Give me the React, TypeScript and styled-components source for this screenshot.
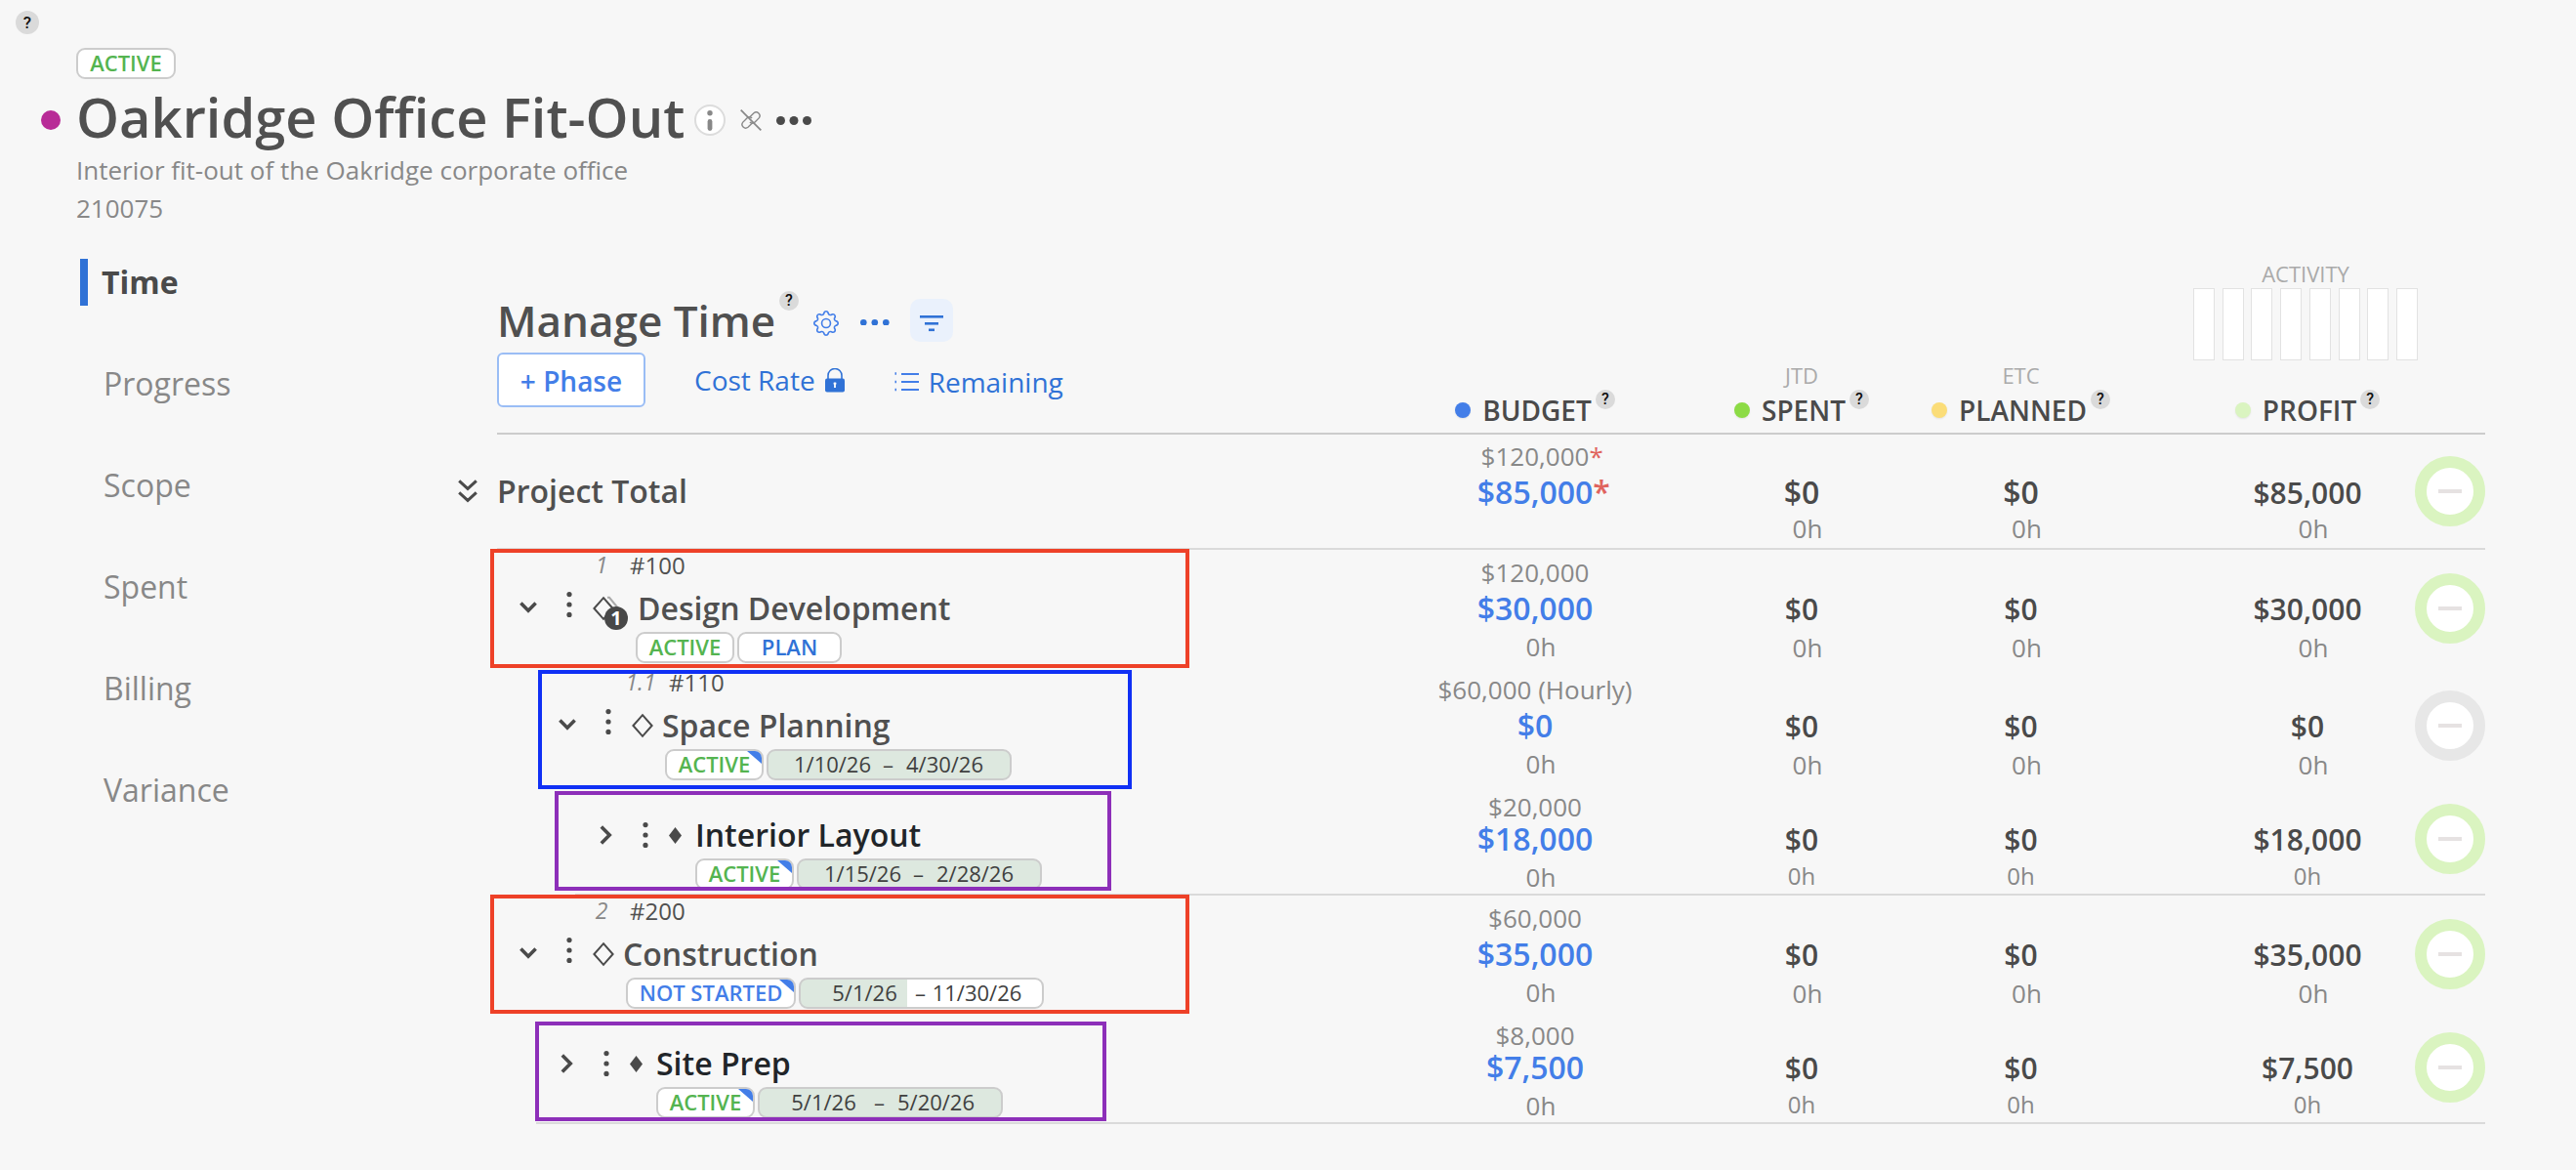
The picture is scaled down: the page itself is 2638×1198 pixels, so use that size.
import React from "react";
import styled, { createGlobalStyle } from "styled-components";
import { BsGear } from "react-icons/bs";

const GlobalStyle = createGlobalStyle`
  * { box-sizing: border-box; }
  body {
    margin: 0;
    background: #f7f7f7;
    color: #505050;
    font-family: "Open Sans", "Noto Sans", sans-serif;
  }
`;

const COLUMNS = "925px 274px 274px 175px 306px 82px";

/* ---------- shared pieces ---------- */

const Page = styled.div`
  width: 2638px;
  height: 1198px;
  overflow: hidden;
  background: #f7f7f7;
`;

const HelpBadge = styled.span<{ $size?: number }>`
  display: flex;
  flex: none;
  align-items: center;
  justify-content: center;
  width: ${(p) => p.$size ?? 20}px;
  height: ${(p) => p.$size ?? 20}px;
  border-radius: 50%;
  background: #dadada;
  color: #111;
  font: 500 ${(p) => ((p.$size ?? 20) > 20 ? 17 : 16)}px / 20px Roboto, sans-serif;
`;

const Tag = styled.span<{ $width: number; $color: string }>`
  position: relative;
  display: flex;
  flex: none;
  align-items: center;
  justify-content: center;
  width: ${(p) => p.$width}px;
  height: 32px;
  overflow: hidden;
  border: 2px solid #cccccc;
  border-radius: 9px;
  background: #fff;
  color: ${(p) => p.$color};
  font-size: 22px;
  font-weight: 600;
  line-height: 28px;
  padding-bottom: 2px;
  white-space: nowrap;
`;

const TagCorner = styled.i`
  position: absolute;
  top: 0;
  right: 0;
  width: 15px;
  height: 13px;
  background: #437ee8;
  clip-path: polygon(0 0, 100% 0, 100% 100%);
`;

/* ---------- project header ---------- */

const TopBar = styled.div`
  display: flex;
  height: 49px;
  padding: 11px 0 0 16px;
`;

const ProjectHeader = styled.header`
  height: 186px;
  padding-left: 78px;
`;

const TitleRow = styled.div`
  display: flex;
  align-items: center;
  height: 68px;
  margin: 8px 0 0 -36px;
`;

const ProjectDot = styled.i`
  width: 20px;
  height: 20px;
  margin-right: 16px;
  border-radius: 50%;
  background: #b82b97;
`;

const ProjectTitle = styled.h1`
  align-self: flex-start;
  width: 633px;
  margin: 0;
  font-size: 56px;
  font-weight: 600;
  line-height: 60px;
  white-space: nowrap;
`;

const InfoButton = styled.span`
  display: flex;
  align-items: center;
  justify-content: center;
  width: 32px;
  height: 32px;
  border: 2px solid #dcdcdc;
  border-radius: 50%;
  background: #fff;
`;

const HeaderIcon = styled.span<{ $left: number }>`
  display: flex;
  margin-left: ${(p) => p.$left}px;
`;

const Meta = styled.p<{ $line: number }>`
  margin: 0;
  color: #888888;
  font-size: 26px;
  line-height: ${(p) => p.$line}px;
`;

/* ---------- navigation ---------- */

const Body = styled.div`
  display: flex;
`;

const Nav = styled.nav`
  flex: none;
  display: flex;
  flex-direction: column;
  gap: 56px;
  width: 427px;
  margin-left: 82px;
  padding-top: 30px;
`;

const NavItem = styled.a<{ $active?: boolean }>`
  height: 48px;
  padding-left: ${(p) => (p.$active ? 14 : 16)}px;
  border-left: 8px solid ${(p) => (p.$active ? "#3072d6" : "transparent")};
  color: ${(p) => (p.$active ? "#4a4a4a" : "#888888")};
  font-size: 32px;
  font-weight: ${(p) => (p.$active ? 700 : 400)};
  line-height: 48px;
`;

/* ---------- table header ---------- */

const Main = styled.main`
  width: 2036px;
`;

const TableHead = styled.div`
  display: grid;
  grid-template-columns: ${COLUMNS};
  align-items: end;
  height: 210px;
  border-bottom: 2px solid #cccccc;
`;

const Tools = styled.div`
  height: 145px;
`;

const ToolRow = styled.div`
  display: flex;
  align-items: center;
  height: 60px;
`;

const SectionTitle = styled.h2`
  width: 289px;
  margin: 0;
  font-size: 44px;
  font-weight: 600;
  line-height: 60px;
  white-space: nowrap;
`;

const RaisedHelp = styled(HelpBadge)`
  align-self: flex-start;
`;

const ToolIcon = styled.span<{ $left: number; $drop?: number }>`
  display: flex;
  margin-left: ${(p) => p.$left}px;
  padding-top: ${(p) => p.$drop ?? 0}px;
  color: #437ee8;
`;

const FilterButton = styled.span`
  display: flex;
  align-items: center;
  justify-content: center;
  width: 44px;
  height: 44px;
  margin-left: 21px;
  padding-top: 7px;
  border-radius: 10px;
  background: #eaf1fc;
`;

const ActionRow = styled.div`
  display: flex;
  height: 56px;
  margin-top: 3px;
  color: #3072d6;
  font-size: 28px;
`;

const PhaseButton = styled.button`
  width: 152px;
  height: 56px;
  padding: 1px 0 0;
  border: 2px solid #9abdf5;
  border-radius: 6px;
  background: #fff;
  color: #437ee8;
  font: 600 28px / 52px "Open Sans", sans-serif;
`;

const Action = styled.span<{ $left: number; $line: number }>`
  display: flex;
  align-items: center;
  margin-left: ${(p) => p.$left}px;
  height: ${(p) => p.$line}px;
  line-height: ${(p) => p.$line}px;
  white-space: nowrap;

  svg { flex: none; }
`;

const HeadCell = styled.div<{ $inset?: number }>`
  display: flex;
  flex-direction: column;
  align-items: center;
  padding-left: ${(p) => p.$inset ?? 0}px;
  padding-bottom: 4px;
`;

const HeadNote = styled.span`
  color: #aaaaaa;
  font-size: 22px;
  line-height: 30px;
  margin-bottom: 2px;
`;

const HeadLabel = styled.div`
  display: flex;
  align-items: center;
  height: 38px;
  color: #4a4a4a;
  font-size: 28px;
  font-weight: 600;
  line-height: 38px;
`;

const LegendDot = styled.i<{ $color: string }>`
  width: 16px;
  height: 16px;
  margin-right: 12px;
  border-radius: 50%;
  background: ${(p) => p.$color};
  box-shadow: 0 1px 2px rgba(0, 0, 0, 0.08);
`;

const ColumnHelp = styled(HelpBadge)`
  align-self: flex-start;
  margin: -2px 0 0 4px;
`;

const ActivityBars = styled.div`
  display: flex;
  gap: 7.7px;
  margin: 0 4px 32px 0;
`;

const ActivityBar = styled.i`
  flex: none;
  width: 22px;
  height: 74px;
  border: 1px solid #e2e2e2;
  background: #fff;
`;

const ActivityLabel = styled.span`
  margin-right: 4px;
  color: #aaaaaa;
  font-size: 22px;
  line-height: 30px;
`;

/* ---------- table rows ---------- */

type Kind = "total" | "phase" | "leaf";

const metrics = {
  total: { height: 116, memo: 6, main: 5, hours: 2, small: 26 },
  phase: { height: 120, memo: 7, main: 5, hours: 5, small: 26 },
  leaf: { height: 112, memo: 7, main: 1, hours: 5, small: 24 },
};

const Row = styled.div<{ $kind: Kind }>`
  position: relative;
  display: grid;
  grid-template-columns: ${COLUMNS};
  height: ${(p) => metrics[p.$kind].height}px;
`;

const Divider = styled.div<{ $inset?: number }>`
  height: 2px;
  margin-left: ${(p) => p.$inset ?? 0}px;
  background: #dadada;
`;

const Outline = styled.div<{ $color: string; $x: number; $y: number; $w: number; $h: number }>`
  position: absolute;
  z-index: 1;
  left: ${(p) => p.$x}px;
  top: ${(p) => p.$y}px;
  width: ${(p) => p.$w}px;
  height: ${(p) => p.$h}px;
  border: 4px solid ${(p) => p.$color};
`;

const TotalName = styled.div`
  display: flex;
  align-items: center;
  height: 115px;
  margin-left: -40px;
  font-size: 32px;
  font-weight: 600;

  svg { margin-right: 20px; }
`;

const NameCell = styled.div`
  display: flex;
  flex-direction: column;
`;

const CodeLine = styled.div<{ $indent: number }>`
  display: flex;
  height: 33px;
  padding-left: ${(p) => p.$indent}px;
  font-size: 24px;
  line-height: 31px;
`;

const Index = styled.em`
  width: 46px;
  margin-right: 6px;
  color: #888888;
  font-size: 23px;
  text-align: center;
`;

const TitleLine = styled.div<{ $indent: number; $leaf?: boolean }>`
  display: flex;
  align-items: center;
  height: ${(p) => (p.$leaf ? 44 : 51)}px;
  margin-top: ${(p) => (p.$leaf ? 30 : 0)}px;
  padding-left: ${(p) => p.$indent}px;

  svg { flex: none; }
`;

const Kebab = styled.span<{ $leaf?: boolean }>`
  display: flex;
  margin: ${(p) => (p.$leaf ? "0 21px 0 31px" : "-5px 21px 0 30px")};
`;

const PhaseIcon = styled.span`
  position: relative;
  display: flex;
  margin-top: 3px;
`;

const CountBadge = styled.b`
  position: absolute;
  left: 12px;
  top: 10px;
  width: 24px;
  height: 24px;
  border-radius: 50%;
  background: #484848;
  color: #fff;
  font-size: 20px;
  line-height: 24px;
  text-align: center;
`;

const ItemTitle = styled.span<{ $gap: number; $leaf?: boolean }>`
  margin-left: ${(p) => p.$gap}px;
  padding-top: ${(p) => (p.$leaf ? 0 : 3)}px;
  color: ${(p) => (p.$leaf ? "#212529" : "#505050")};
  font-size: 32px;
  font-weight: 600;
  line-height: 44px;
  white-space: nowrap;
`;

const TagLine = styled.div<{ $indent: number; $leaf?: boolean }>`
  display: flex;
  gap: 3px;
  margin-top: ${(p) => (p.$leaf ? 2 : 0)}px;
  padding-left: ${(p) => p.$indent}px;
`;

const DateTag = styled.span<{ $partial?: boolean }>`
  display: grid;
  grid-template-columns: 92px 22px 94px;
  width: 251px;
  height: 32px;
  padding-left: 19.5px;
  border: 2px solid #cccccc;
  border-radius: 9px;
  background: ${(p) =>
    p.$partial ? "linear-gradient(90deg, #dde8df 109px, #ffffff 109px)" : "#dde8df"};
  color: #404040;
  font-size: 22px;
  line-height: 27px;
  text-align: center;
`;

const Cell = styled.div<{ $inset?: number }>`
  display: flex;
  flex-direction: column;
  align-items: center;
  padding-left: ${(p) => p.$inset ?? 0}px;
  white-space: nowrap;
`;

const Memo = styled.span<{ $kind: Kind }>`
  height: 32px;
  margin-top: ${(p) => metrics[p.$kind].memo}px;
  color: #888888;
  font-size: 26px;
  line-height: 32px;
`;

const Amount = styled.span<{ $kind: Kind; $budget?: boolean }>`
  height: 32px;
  margin-top: ${(p) => metrics[p.$kind].main}px;
  color: ${(p) => (p.$budget ? "#437ee8" : "#4a4a4a")};
  font-size: ${(p) => (p.$budget || p.$kind === "total" ? 32 : 30)}px;
  font-weight: 600;
  line-height: ${(p) => (p.$budget || p.$kind === "total" ? 32 : 34)}px;
`;

const ProfitAmount = styled(Amount)`
  font-size: 30px;
  line-height: 34px;
`;

const Hours = styled.span<{ $kind: Kind; $budget?: boolean }>`
  margin-top: ${(p) => metrics[p.$kind].hours + (p.$budget ? 0 : 1)}px;
  padding-left: ${(p) => (p.$kind === "leaf" && !p.$budget ? 0 : 12)}px;
  color: #888888;
  font-size: ${(p) => (p.$budget ? 26 : metrics[p.$kind].small)}px;
  line-height: ${(p) => (p.$kind === "leaf" && !p.$budget ? 32 : 36)}px;
`;

const Star = styled.span`
  color: #e0645e;
  margin-right: -0.55em;
`;

const RingCell = styled.div<{ $kind: Kind }>`
  display: flex;
  justify-content: flex-end;
  padding-top: ${(p) => (p.$kind === "total" ? 22 : p.$kind === "phase" ? 24 : 20)}px;
`;

const Ring = styled.span<{ $empty?: boolean }>`
  display: flex;
  align-items: center;
  justify-content: center;
  width: 72px;
  height: 72px;
  border: 12px solid ${(p) => (p.$empty ? "#e7e7e7" : "#daf4c0")};
  border-radius: 50%;
  background: #fff;

  &::after {
    content: "";
    width: 24px;
    height: 4px;
    background: #e6e2e2;
  }
`;

/* ---------- icons ---------- */

const Dots = ({ r, gap, color }: { r: number; gap: number; color: string }) => (
  <svg width={gap * 2 + r * 2} height={r * 2} fill={color}>
    {[0, 1, 2].map((i) => (
      <circle key={i} cx={r + gap * i} cy={r} r={r} />
    ))}
  </svg>
);

const KebabIcon = () => (
  <svg width="6" height="26" fill="#4a4a4a">
    <circle cx="3" cy="2.6" r="2.6" />
    <circle cx="3" cy="13" r="2.6" />
    <circle cx="3" cy="23.4" r="2.6" />
  </svg>
);

const ChevronDown = () => (
  <svg width="18" height="12" fill="none" stroke="#4a4a4a" strokeWidth="3.6">
    <path d="M1.4 1.6 9 9.2l7.6-7.6" />
  </svg>
);

const ChevronRight = () => (
  <svg width="13" height="20" fill="none" stroke="#4a4a4a" strokeWidth="3.6">
    <path d="M1.8 1.6 10.2 10l-8.4 8.4" />
  </svg>
);

const DoubleChevron = () => (
  <svg width="20" height="24" fill="none" stroke="#4a4a4a" strokeWidth="3">
    <path d="M1.2 1.4 10 9.4l8.8-8M1.2 13.4l8.8 8 8.8-8" />
  </svg>
);

const Diamond = ({ stacked }: { stacked?: boolean }) => (
  <svg width="22" height="24" fill="none" overflow="visible" strokeWidth="2">
    {stacked && <path d="M15 .8h2L27 13" stroke="#aaaaaa" />}
    <path d="M11 1.2 20.6 12 11 22.8 1.4 12Z" stroke="#4a4a4a" />
  </svg>
);

const SolidDiamond = () => (
  <svg width="13" height="17" fill="#4a4a4a">
    <path d="M6.5 0 13 8.5 6.5 17 0 8.5Z" />
  </svg>
);

const InfoGlyph = () => (
  <svg width="6" height="21" fill="#888888">
    <circle cx="3" cy="2.7" r="2.7" />
    <rect x="0.6" y="9" width="4.8" height="12" rx="2.4" />
  </svg>
);

const UnlinkIcon = () => (
  <svg width="22" height="22" fill="none" stroke="#888888" strokeWidth="1.4">
    <path d="M.7.7 21.3 21.3" strokeWidth="1.8" />
    <path d="M9.4 8.2 14 3.7a3.7 3.7 0 0 1 5.2 5.2l-4.1 4.1a3.7 3.7 0 0 1-5.2 0" />
    <path d="M12.6 13.8 8 18.3a3.7 3.7 0 0 1-5.2-5.2L6.9 9a3.7 3.7 0 0 1 5.2 0" />
  </svg>
);

const FilterIcon = () => (
  <svg width="24" height="17" fill="#3072d6">
    <rect width="24" height="2.6" />
    <rect x="5" y="7" width="14" height="2.6" />
    <rect x="9" y="13.5" width="6" height="2.6" />
  </svg>
);

const LockIcon = () => (
  <svg width="20" height="25" fill="none">
    <path d="M3 11V7.5a7 7 0 0 1 14 0V11" stroke="#3072d6" strokeWidth="1.6" />
    <rect y="10.5" width="20" height="14" rx="2" fill="#3072d6" />
    <path d="M10 14.5v5.5M8.6 15.6h2.8" stroke="#fff" strokeWidth="1.8" />
  </svg>
);

const ListIcon = () => (
  <svg width="25" height="20" fill="none" stroke="#437ee8" strokeWidth="1.8">
    <path d="M7 2h18M7 10h18M7 18h18" />
    <path d="M.5 1.5h1.5M.5 10h1.5M.5 18h1.5" strokeWidth="2.4" />
  </svg>
);

/* ---------- data ---------- */

const GREEN = "#54b450";
const RED_LINE = "#ee4128";
const BLUE_LINE = "#1030f5";
const PURPLE_LINE = "#8d2fb9";

interface Item {
  title: string;
  index?: string;
  code?: string;
  leaf?: boolean;
  count?: string;
  indent: number;
  gap: number;
  tagIndent: number;
  status: string;
  statusWidth: number;
  statusColor: string;
  plan?: boolean;
  from?: string;
  to?: string;
  partial?: boolean;
  memo: string;
  budget: string;
  profit: string;
  outline: { color: string; x: number; y: number; w: number; h: number };
  divider?: number;
}

const items: Item[] = [
  {
    title: "Design Development", index: "1", code: "#100", count: "1",
    indent: 23, gap: 24, tagIndent: 142,
    status: "ACTIVE", statusWidth: 101, statusColor: GREEN, plan: true,
    memo: "$120,000", budget: "$30,000", profit: "$30,000",
    outline: { color: RED_LINE, x: -7, y: -1, w: 716, h: 122 },
  },
  {
    title: "Space Planning", index: "1.1", code: "#110",
    indent: 63, gap: 9, tagIndent: 172,
    status: "ACTIVE", statusWidth: 101, statusColor: GREEN, from: "1/10/26", to: "4/30/26",
    memo: "$60,000 (Hourly)", budget: "$0", profit: "$0",
    outline: { color: BLUE_LINE, x: 42, y: 3, w: 608, h: 122 },
  },
  {
    title: "Interior Layout", leaf: true,
    indent: 105, gap: 14, tagIndent: 203,
    status: "ACTIVE", statusWidth: 101, statusColor: GREEN, from: "1/15/26", to: "2/28/26",
    memo: "$20,000", budget: "$18,000", profit: "$18,000",
    outline: { color: PURPLE_LINE, x: 59, y: 7, w: 570, h: 102 },
    divider: 80,
  },
  {
    title: "Construction", index: "2", code: "#200",
    indent: 23, gap: 9, tagIndent: 132,
    status: "NOT STARTED", statusWidth: 174, statusColor: "#437ee8",
    from: "5/1/26", to: "11/30/26", partial: true,
    memo: "$60,000", budget: "$35,000", profit: "$35,000",
    outline: { color: RED_LINE, x: -7, y: -1, w: 716, h: 122 },
  },
  {
    title: "Site Prep", leaf: true,
    indent: 65, gap: 14, tagIndent: 163,
    status: "ACTIVE", statusWidth: 101, statusColor: GREEN, from: "5/1/26", to: "5/20/26",
    memo: "$8,000", budget: "$7,500", profit: "$7,500",
    outline: { color: PURPLE_LINE, x: 39, y: 9, w: 585, h: 102 },
    divider: 40,
  },
];

const ItemRow = ({ item }: { item: Item }) => {
  const kind: Kind = item.leaf ? "leaf" : "phase";
  const o = item.outline;
  return (
    <>
      <Row $kind={kind}>
        <NameCell>
          {item.code && (
            <CodeLine $indent={item.indent + 61}>
              <Index>{item.index}</Index>
              {item.code}
            </CodeLine>
          )}
          <TitleLine $indent={item.indent} $leaf={item.leaf}>
            {item.leaf ? <ChevronRight /> : <ChevronDown />}
            <Kebab $leaf={item.leaf}><KebabIcon /></Kebab>
            {item.leaf ? (
              <SolidDiamond />
            ) : (
              <PhaseIcon>
                <Diamond stacked={!!item.count} />
                {item.count && <CountBadge>{item.count}</CountBadge>}
              </PhaseIcon>
            )}
            <ItemTitle $gap={item.gap} $leaf={item.leaf}>{item.title}</ItemTitle>
          </TitleLine>
          <TagLine $indent={item.tagIndent} $leaf={item.leaf}>
            <Tag $width={item.statusWidth} $color={item.statusColor}>
              {item.status}
              {item.from && <TagCorner />}
            </Tag>
            {item.plan && <Tag $width={107} $color="#3072d6">PLAN</Tag>}
            {item.from && (
              <DateTag $partial={item.partial}>
                <span>{item.from}</span>
                <span>–</span>
                <span>{item.to}</span>
              </DateTag>
            )}
          </TagLine>
        </NameCell>
        <Cell $inset={2}>
          <Memo $kind={kind}>{item.memo}</Memo>
          <Amount $kind={kind} $budget>{item.budget}</Amount>
          <Hours $kind={kind} $budget>0h</Hours>
        </Cell>
        <Cell>
          <Memo $kind={kind} />
          <Amount $kind={kind}>$0</Amount>
          <Hours $kind={kind}>0h</Hours>
        </Cell>
        <Cell>
          <Memo $kind={kind} />
          <Amount $kind={kind}>$0</Amount>
          <Hours $kind={kind}>0h</Hours>
        </Cell>
        <Cell $inset={106}>
          <Memo $kind={kind} />
          <ProfitAmount $kind={kind}>{item.profit}</ProfitAmount>
          <Hours $kind={kind}>0h</Hours>
        </Cell>
        <RingCell $kind={kind}><Ring $empty={item.profit === "$0"} /></RingCell>
        <Outline $color={o.color} $x={o.x} $y={o.y} $w={o.w} $h={o.h} />
      </Row>
      {item.divider !== undefined && <Divider $inset={item.divider} />}
    </>
  );
};

const ColumnHead = ({ label, color }: { label: string; color: string }) => (
  <HeadLabel>
    <LegendDot $color={color} />
    {label}
    <ColumnHelp>?</ColumnHelp>
  </HeadLabel>
);

export default function App() {
  return (
    <Page>
      <GlobalStyle />
      <TopBar><HelpBadge $size={24}>?</HelpBadge></TopBar>
      <ProjectHeader>
        <Tag $width={102} $color={GREEN}>ACTIVE</Tag>
        <TitleRow>
          <ProjectDot />
          <ProjectTitle>Oakridge Office Fit-Out</ProjectTitle>
          <InfoButton><InfoGlyph /></InfoButton>
          <HeaderIcon $left={15}><UnlinkIcon /></HeaderIcon>
          <HeaderIcon $left={15}><Dots r={4.5} gap={13.5} color="#4a4a4a" /></HeaderIcon>
        </TitleRow>
        <Meta $line={34}>Interior fit-out of the Oakridge corporate office</Meta>
        <Meta $line={44}>210075</Meta>
      </ProjectHeader>

      <Body>
        <Nav>
          <NavItem $active>Time</NavItem>
          {["Progress", "Scope", "Spent", "Billing", "Variance"].map((n) => (
            <NavItem key={n}>{n}</NavItem>
          ))}
        </Nav>

        <Main>
          <TableHead>
            <Tools>
              <ToolRow>
                <SectionTitle>Manage Time</SectionTitle>
                <RaisedHelp>?</RaisedHelp>
                <ToolIcon $left={15} $drop={6}><BsGear size={26} /></ToolIcon>
                <ToolIcon $left={22} $drop={4}><Dots r={3.3} gap={11.5} color="#3072d6" /></ToolIcon>
                <FilterButton><FilterIcon /></FilterButton>
              </ToolRow>
              <ActionRow>
                <PhaseButton>+ Phase</PhaseButton>
                <Action $left={50} $line={57}>
                  <span>Cost Rate</span>
                  <HeaderIcon $left={10}><LockIcon /></HeaderIcon>
                </Action>
                <Action $left={51} $line={60}>
                  <ListIcon />
                  <HeaderIcon $left={10}>Remaining</HeaderIcon>
                </Action>
              </ActionRow>
            </Tools>
            <HeadCell $inset={2}><ColumnHead label="BUDGET" color="#437ee8" /></HeadCell>
            <HeadCell>
              <HeadNote>JTD</HeadNote>
              <ColumnHead label="SPENT" color="#8cdb45" />
            </HeadCell>
            <HeadCell>
              <HeadNote>ETC</HeadNote>
              <ColumnHead label="PLANNED" color="#fbdd78" />
            </HeadCell>
            <HeadCell $inset={106}>
              <ActivityLabel>ACTIVITY</ActivityLabel>
              <ActivityBars>
                {Array.from({ length: 8 }, (_, i) => <ActivityBar key={i} />)}
              </ActivityBars>
              <ColumnHead label="PROFIT" color="#daf4c0" />
            </HeadCell>
          </TableHead>

          <Row $kind="total">
            <TotalName><DoubleChevron />Project Total</TotalName>
            <Cell $inset={2}>
              <Memo $kind="total">$120,000<Star>*</Star></Memo>
              <Amount $kind="total" $budget>$85,000<Star>*</Star></Amount>
            </Cell>
            <Cell>
              <Memo $kind="total" />
              <Amount $kind="total">$0</Amount>
              <Hours $kind="total">0h</Hours>
            </Cell>
            <Cell>
              <Memo $kind="total" />
              <Amount $kind="total">$0</Amount>
              <Hours $kind="total">0h</Hours>
            </Cell>
            <Cell $inset={106}>
              <Memo $kind="total" />
              <ProfitAmount $kind="total">$85,000</ProfitAmount>
              <Hours $kind="total">0h</Hours>
            </Cell>
            <RingCell $kind="total"><Ring /></RingCell>
          </Row>
          <Divider />
          {items.map((item) => <ItemRow key={item.title} item={item} />)}
        </Main>
      </Body>
    </Page>
  );
}
